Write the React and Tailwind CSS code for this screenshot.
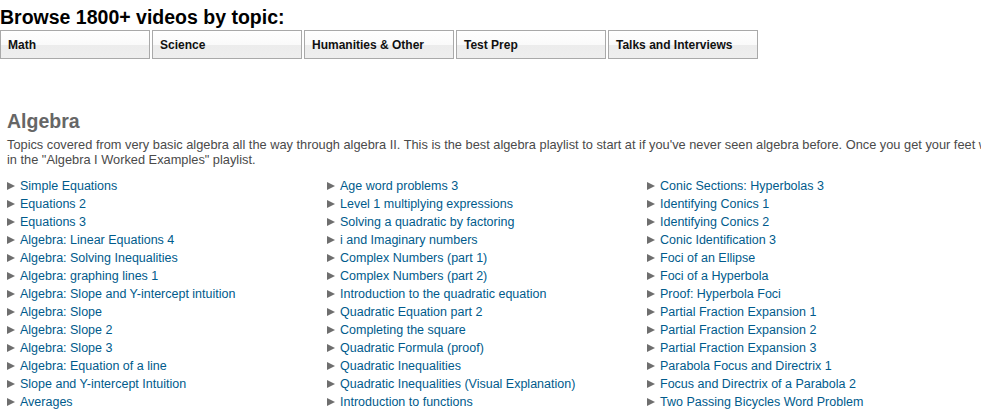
import React from "react";

const tabs = ["Math", "Science", "Humanities & Other", "Test Prep", "Talks and Interviews"];

const cols = [
  [
    "Simple Equations",
    "Equations 2",
    "Equations 3",
    "Algebra: Linear Equations 4",
    "Algebra: Solving Inequalities",
    "Algebra: graphing lines 1",
    "Algebra: Slope and Y-intercept intuition",
    "Algebra: Slope",
    "Algebra: Slope 2",
    "Algebra: Slope 3",
    "Algebra: Equation of a line",
    "Slope and Y-intercept Intuition",
    "Averages",
  ],
  [
    "Age word problems 3",
    "Level 1 multiplying expressions",
    "Solving a quadratic by factoring",
    "i and Imaginary numbers",
    "Complex Numbers (part 1)",
    "Complex Numbers (part 2)",
    "Introduction to the quadratic equation",
    "Quadratic Equation part 2",
    "Completing the square",
    "Quadratic Formula (proof)",
    "Quadratic Inequalities",
    "Quadratic Inequalities (Visual Explanation)",
    "Introduction to functions",
  ],
  [
    "Conic Sections: Hyperbolas 3",
    "Identifying Conics 1",
    "Identifying Conics 2",
    "Conic Identification 3",
    "Foci of an Ellipse",
    "Foci of a Hyperbola",
    "Proof: Hyperbola Foci",
    "Partial Fraction Expansion 1",
    "Partial Fraction Expansion 2",
    "Partial Fraction Expansion 3",
    "Parabola Focus and Directrix 1",
    "Focus and Directrix of a Parabola 2",
    "Two Passing Bicycles Word Problem",
  ],
];

function Arrow() {
  return (
    <svg width="8" height="8" viewBox="0 0 8 8" className="shrink-0">
      <polygon points="0,0 8,4 0,8" fill="#6e6e6e" />
    </svg>
  );
}

export default function App() {
  return (
    <div className="w-[981px] h-[411px] overflow-hidden bg-white font-['Liberation_Sans',Arial,sans-serif]">
      <h1 className="mt-[6px] text-[19.5px] leading-[22px] font-bold text-black whitespace-nowrap">
        Browse 1800+ videos by topic:
      </h1>
      <div className="mt-[2px] flex">
        {tabs.map((t) => (
          <div
            key={t}
            className="mr-[2px] flex h-[29px] w-[150px] items-center border border-[#a9a9a9] bg-[linear-gradient(#ffffff_0%,#fafafa_50%,#ececec_52%,#eeeeee_100%)] pl-[7px] text-[12px] font-bold text-[#111]"
          >
            {t}
          </div>
        ))}
      </div>
      <div className="pl-[7px]">
        <h2 className="mt-[50px] text-[19.5px] leading-[24px] font-bold text-[#666666]">Algebra</h2>
        <p className="mt-[4px] whitespace-nowrap text-[12.8px] leading-[15px] text-[#4a4a4a]">
          Topics covered from very basic algebra all the way through algebra II. This is the best algebra playlist to start at if you've never seen algebra before. Once you get your feet wet with the basics, you can also check out the examples
          <br />
          in the "Algebra I Worked Examples" playlist.
        </p>
        <div className="mt-[10px] grid grid-cols-[320px_320px_320px]">
          {cols.map((col, i) => (
            <ul key={i}>
              {col.map((item) => (
                <li key={item} className="flex h-[18px] items-center gap-[5px] whitespace-nowrap">
                  <Arrow />
                  <a className="text-[12.5px] leading-[18px] text-[#005b8c]">{item}</a>
                </li>
              ))}
            </ul>
          ))}
        </div>
      </div>
    </div>
  );
}
